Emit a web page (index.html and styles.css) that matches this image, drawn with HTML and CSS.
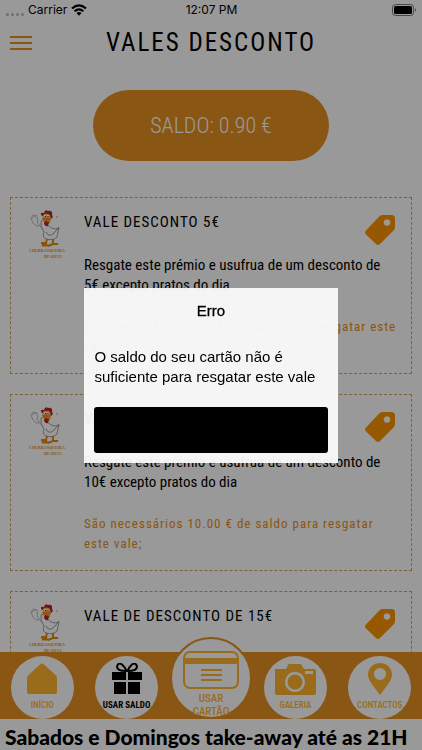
FILE: index.html
```html
<!DOCTYPE html>
<html lang="pt">
<head>
<meta charset="utf-8">
<meta name="viewport" content="width=device-width, initial-scale=1">
<title>Vales Desconto</title>
<link rel="stylesheet" href="styles.css">
</head>
<body>
<svg class="defs" aria-hidden="true">
  <symbol id="tag" viewBox="0 0 30 30">
    <path fill-rule="evenodd" d="M14.500 1.200Q16 0 18 0H26.500Q30 0 30 3.500V12Q30 14 28.500 15.500L15 29Q13 31 11 29L1 19.500Q-1 17.500 1 15.500ZM22 4.200a3.300 3.300 0 1 0 .01 0Z"/>
  </symbol>
  <symbol id="rooster" viewBox="0 0 36 50">
    <path d="M12 11Q11 17 15 22Q13 27 17 29Q24 31 28 27L30 18Q27 20 22 18Q18 16 17 10Z" fill="#fff" stroke="#888" stroke-width=".8"/>
    <path d="M10 16Q7 17 4 13L2 8Q2 6 4 8L4 5Q5 4 6 7L7 5Q9 6 8 9Q10 9 8 12L14 20" fill="#fff" stroke="#aaa" stroke-width=".8"/>
    <path d="M17 22Q20 28 25 23Q28 20 30 17" fill="none" stroke="#777" stroke-width=".8"/>
    <path d="M13 6Q10 2 15 3Q16 -1 19 1Q24 0 23 5Q25 7 22 9Z" fill="#c52024"/>
    <path d="M14 5Q17 2 21 5Q23 10 20 14Q15 14 14 9Z" fill="#efab47"/>
    <path d="M13 8Q18 6 22 9Q18 12 14 10Z" fill="#ff8b00"/>
    <path d="M16 11L20 12L19 16Q16 17 15 13Z" fill="#c52024"/>
    <circle cx="16" cy="6" r="1.500" fill="#fff"/><circle cx="19" cy="6" r="1.500" fill="#fff"/>
    <circle cx="16.500" cy="6.500" r=".6" fill="#000"/><circle cx="19" cy="6.500" r=".6" fill="#000"/>
    <path d="M18 29L17 33L12 33M24 29V34H29M18 33L13 35.500H21M24 34L19 36" fill="none" stroke="#e38b14" stroke-width="2"/>
    <circle cx="28" cy="7" r=".7" fill="#d77a28"/>
  </symbol>
</svg>

<div class="app">
  <div class="status">
    <span class="carrier"><span class="dots"><i></i><i></i><i></i><i></i></span>Carrier
      <svg class="wifi" viewBox="0 0 16 12" aria-hidden="true"><g fill="none" stroke="#000" stroke-width="2.200"><path d="M1 4.500Q8 -1.800 15 4.500M3.600 7.300Q8 3.300 12.400 7.300"/></g><path d="M5.500 9Q8 7 10.500 9L8 11.700Z"/></svg>
    </span>
    <span>12:07 PM</span>
    <svg class="battery" viewBox="0 0 25 12" aria-hidden="true"><rect x=".5" y=".5" width="21" height="11" rx="3" fill="none" stroke="#777"/><rect x="2" y="2" width="18" height="8" rx="1.500"/><path d="M23 4Q25 6 23 8Z" fill="#777"/></svg>
  </div>
  <header class="header">
    <button class="menu" aria-label="Menu"><i></i><i></i><i></i></button>
    <h1>VALES DESCONTO</h1>
  </header>
  <main class="content">
    <p class="balance">SALDO: 0.90 €</p>
    <article class="card">
      <svg class="logo" viewBox="0 0 36 50"><use href="#rooster" width="36" height="50"/><text x="18" y="42">CHURRASQUEIRA</text><text x="24" y="48">DE SILVA</text></svg>
      <div class="card-text">
        <h2>VALE DESCONTO 5€</h2>
        <p>Resgate este prémio e usufrua de um desconto de 5€&nbsp;excepto pratos do dia</p>
        <p class="need">São necessários 5.00 € de saldo para resgatar este vale;</p>
      </div>
      <svg class="tag"><use href="#tag"/></svg>
    </article>
    <article class="card">
      <svg class="logo" viewBox="0 0 36 50"><use href="#rooster" width="36" height="50"/><text x="18" y="42">CHURRASQUEIRA</text><text x="24" y="48">DE SILVA</text></svg>
      <div class="card-text">
        <h2>VALE DESCONTO 10€</h2>
        <p>Resgate este prémio e usufrua de um desconto de 10€&nbsp;excepto pratos do dia</p>
        <p class="need">São necessários 10.00 € de saldo para resgatar este vale;</p>
      </div>
      <svg class="tag"><use href="#tag"/></svg>
    </article>
    <article class="card">
      <svg class="logo" viewBox="0 0 36 50"><use href="#rooster" width="36" height="50"/><text x="18" y="42">CHURRASQUEIRA</text><text x="24" y="48">DE SILVA</text></svg>
      <div class="card-text">
        <h2>VALE DE DESCONTO DE 15€</h2>
      </div>
      <svg class="tag"><use href="#tag"/></svg>
    </article>
  </main>
  <nav class="tabs">
    <a class="tab" href="#inicio">
      <svg viewBox="0 0 32 32"><path d="M14.500 1Q16 0 17.500 1L30 12.500Q31 13.500 31 15V29Q31 31 29 31H3Q1 31 1 29V15Q1 13.500 2 12.500Z"/></svg>
      <span>INÍCIO</span>
    </a>
    <a class="tab active" href="#saldo">
      <svg viewBox="0 0 32 32"><path d="M1 9H15V17H1ZM17 9H31V17H17ZM3 19H15V31H3ZM17 19H29V31H17Z"/><path d="M15.500 8Q6 8 6 3.500Q7 -1 11 1.500Q14 4 15.500 8ZM16.500 8Q26 8 26 3.500Q25 -1 21 1.500Q18 4 16.500 8Z" fill="none" stroke="#000" stroke-width="2"/></svg>
      <span>USAR SALDO</span>
    </a>
    <a class="tab main-tab" href="#cartao">
      <svg viewBox="0 0 56 38"><rect x="1" y="1" width="54" height="36" rx="6" fill="none" stroke="#ffb52e" stroke-width="2"/><path d="M1 7H55V13H1ZM18 18H39V20H18ZM18 23H39V25H18ZM18 28H39V30H18Z"/></svg>
      <span>USAR<br>CARTÃO</span>
    </a>
    <a class="tab" href="#galeria">
      <svg class="camera" viewBox="0 0 42 32"><path fill-rule="evenodd" d="M1 6H12L14 2Q14 1 16 1H26Q28 1 28 3L30 6H40Q42 6 42 8V30Q42 32 40 32H3Q1 32 1 30ZM31 8V11H39V8ZM21 9a10 10 0 1 0 .01 0Z"/><circle cx="21" cy="19" r="7.500"/></svg>
      <span>GALERIA</span>
    </a>
    <a class="tab" href="#contactos">
      <svg viewBox="0 0 32 32"><path fill-rule="evenodd" d="M16 0C9 0 4 5 4 12C4 18 12 26 16 32C20 26 28 18 28 12C28 5 23 0 16 0ZM16 5a6 6 0 1 1 -.01 0Z"/></svg>
      <span>CONTACTOS</span>
    </a>
  </nav>
  <footer class="ticker">Sabados e Domingos take-away até as 21H</footer>
</div>

<div class="overlay">
  <section class="dialog" role="alertdialog" aria-labelledby="dlg-title">
    <h2 id="dlg-title">Erro</h2>
    <p>O saldo do seu cartão não é suficiente para resgatar este vale</p>
    <button aria-label="Fechar"></button>
  </section>
</div>
</body>
</html>
```
FILE: styles.css
```css
* { box-sizing: border-box; }
body, h1, h2, p { margin: 0; }
body {
  font-family: "Roboto Condensed", "Liberation Sans Narrow", Roboto, sans-serif;
  font-size: 15px;
  line-height: 20px;
  color: #000;
  background: #fff;
}
.defs { position: absolute; width: 0; height: 0; }
.app { height: 100vh; display: flex; flex-direction: column; overflow: hidden; }

.status {
  display: grid;
  grid-template-columns: 1fr auto 1fr;
  align-items: center;
  height: 20px;
  padding: 0 5px 0 6px;
  font-family: Inter, sans-serif;
  font-size: 12px;
}
.carrier { display: flex; align-items: center; gap: 4px; }
.dots { display: flex; gap: 2px; padding-top: 8px; }
.dots i { width: 3px; height: 3px; border-radius: 50%; background: #bbb; }
.wifi { width: 16px; height: 12px; }
.battery { width: 25px; height: 12px; justify-self: end; }

.header {
  display: grid;
  grid-template-columns: 24px 1fr 24px;
  align-items: center;
  height: 46px;
  padding: 0 9px;
  flex: none;
}
.menu { display: grid; gap: 4px; padding: 1px; border: 0; background: none; }
.menu i { height: 2px; background: #e78f20; }
h1 { font-size: 25px; line-height: 32px; font-weight: 400; letter-spacing: 2px; text-align: center; }

.content { flex: 1; min-height: 0; overflow: hidden; padding: 24px 10px 0; }
.balance {
  width: fit-content;
  margin: 0 auto 36px;
  padding: 20px 57px;
  border-radius: 36px;
  background: #e78f20;
  color: #fff;
  font-size: 22px;
  line-height: 31px;
  font-weight: 300;
}
.card {
  display: grid;
  grid-template-columns: 36px 1fr 30px;
  column-gap: 19px;
  min-height: 177px;
  margin-bottom: 20px;
  padding: 12px 16px 12px 18px;
  border: 1px dashed #cba455;
}
.card-text { padding-top: 2px; margin-right: -52px; }
.card h2 { font-size: 15px; line-height: 20px; font-weight: 400; letter-spacing: 1px; margin-bottom: 23px; }
.card .need { margin-top: 22px; color: #e78f20; font-size: 13px; letter-spacing: 1px; }
.logo { width: 36px; height: 50px; font: 700 4px "Liberation Serif", serif; fill: #e78f20; text-anchor: middle; }
.tag { width: 30px; height: 30px; margin-top: 5px; fill: #fa9300; }

.tabs {
  display: grid;
  grid-template-columns: repeat(5, 1fr);
  grid-template-rows: 100%;
  justify-items: center;
  align-items: end;
  height: 67px;
  flex: none;
  background: #e78f20;
}
.tab {
  display: flex;
  flex-direction: column;
  align-items: center;
  gap: 4px;
  width: 63px;
  height: 63px;
  padding-top: 7px;
  border-radius: 50%;
  background: #fff;
  color: #ffb52e;
  fill: #ffb52e;
  font-size: 9px;
  font-weight: 500;
  line-height: 12px;
  white-space: nowrap;
  text-decoration: none;
}
.tab svg { width: 32px; height: 32px; flex: none; }
.tab .camera { width: 42px; }
.active { color: #000; fill: #000; font-weight: 700; }
.main-tab {
  gap: 3px;
  width: 82px;
  height: 82px;
  padding-top: 12px;
  border: 2px solid #e78f20;
  text-align: center;
  font-size: 11px;
  line-height: 13px;
}
.main-tab svg { width: 56px; height: 38px; }
.ticker {
  flex: none;
  height: 31px;
  padding: 0 5px;
  font-family: Lato, sans-serif;
  font-weight: 900;
  font-size: 21px;
  line-height: 36px;
  white-space: nowrap;
}

.overlay {
  position: fixed;
  inset: 0;
  display: grid;
  place-items: center;
  background: rgba(0, 0, 0, .4);
}
.dialog {
  width: 60%;
  padding: 13px 10px 10px;
  background: rgba(250, 250, 250, .95);
  font-family: "Liberation Sans", sans-serif;
  font-size: 15px;
}
.dialog h2 { font-size: 15px; line-height: 20px; font-weight: 400; text-align: center; -webkit-text-stroke: .3px; }
.dialog p { line-height: 20px; margin: 26px 0 20px; }
.dialog button { display: block; width: 100%; height: 46px; border: 0; border-radius: 3px; background: #000; }
```
